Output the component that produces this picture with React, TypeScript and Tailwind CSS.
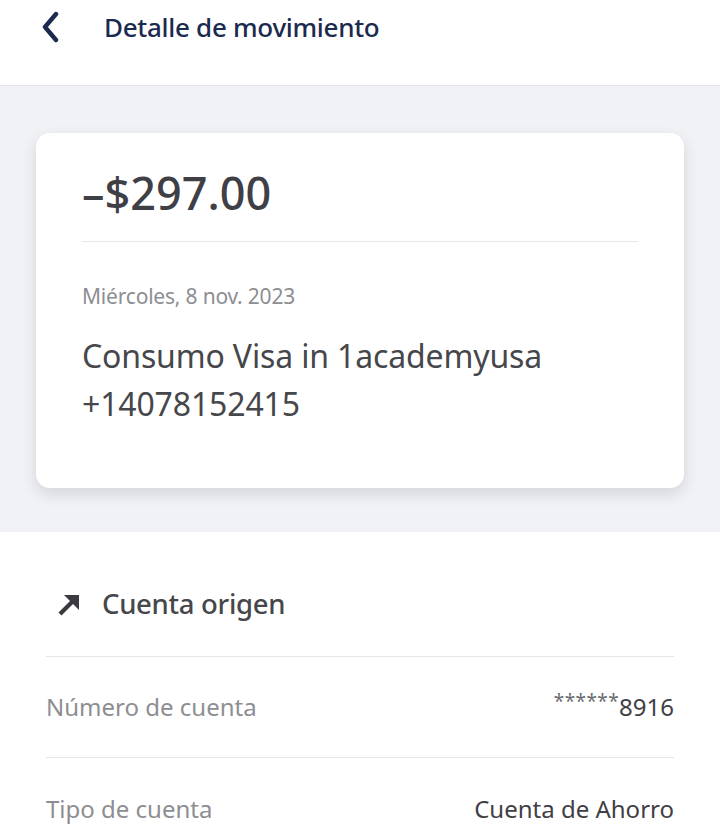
import React from "react";

export default function App() {
  return (
    <div className="w-[720px] h-[837px] overflow-hidden bg-white" style={{ fontFamily: '"Noto Sans", "Open Sans", sans-serif' }}>
      <header className="h-[86px] flex items-start pt-[8px] border-b border-[#e3e4e8] bg-white">
        <div className="w-[104px] h-[38px] flex items-center pl-[39px]">
          <svg width="22" height="32" viewBox="0 0 22 32" fill="none">
            <path d="M17 3 L6 16 L17 29" stroke="#1b2a4e" strokeWidth="4.4" strokeLinecap="round" strokeLinejoin="round" />
          </svg>
        </div>
        <h1 className="text-[26px] leading-[38px] font-medium text-[#1b2a4e] tracking-[-0.3px]">Detalle de movimiento</h1>
      </header>
      <section className="bg-[#f1f2f6] px-[36px] pt-[47px] pb-[44px]">
        <div className="bg-white rounded-[14px] shadow-[0_6px_16px_rgba(0,0,0,0.12)] px-[46px] pt-[30px] pb-[62px] h-[355px]">
          <div className="text-[45px] leading-[60px] font-medium text-[#3f4045] pb-[18px] border-b border-[#e8e8ea]">
            –$297.00
          </div>
          <div className="mt-[40px] text-[21px] leading-[28px] text-[#8d8e92] tracking-[-0.2px]">Miércoles, 8 nov. 2023</div>
          <div className="mt-[22px] text-[32px] leading-[48px] text-[#46474b] tracking-[-0.15px]">
            Consumo Visa in 1academyusa
            <br />
            +14078152415
          </div>
        </div>
      </section>
      <section className="px-[46px] bg-white">
        <div className="h-[125px] flex items-center gap-[21px] pl-[11px] pt-[20px] border-b border-[#e6e6e8]">
          <svg width="24" height="24" viewBox="0 0 24 24" fill="none">
            <path d="M3 22 L17 8" stroke="#3a3b40" strokeWidth="4.2" strokeLinecap="butt" />
            <path d="M7 3 H22 V18 Z" fill="#3a3b40" />
          </svg>
          <span className="text-[27.5px] font-medium text-[#46474b] tracking-[-0.3px]">Cuenta origen</span>
        </div>
        <div className="h-[101px] flex items-center justify-between border-b border-[#e6e6e8]">
          <span className="text-[24px] text-[#8d8e92]">Número de cuenta</span>
          <span className="text-[24px] text-[#3f4045] flex items-start">
            <span className="text-[19px] leading-[24px] text-[#6a6b70] tracking-[0.4px]">******</span>8916
          </span>
        </div>
        <div className="h-[101px] flex items-center justify-between">
          <span className="text-[24px] text-[#8d8e92]">Tipo de cuenta</span>
          <span className="text-[24px] text-[#3f4045]">Cuenta de Ahorro</span>
        </div>
      </section>
    </div>
  );
}
